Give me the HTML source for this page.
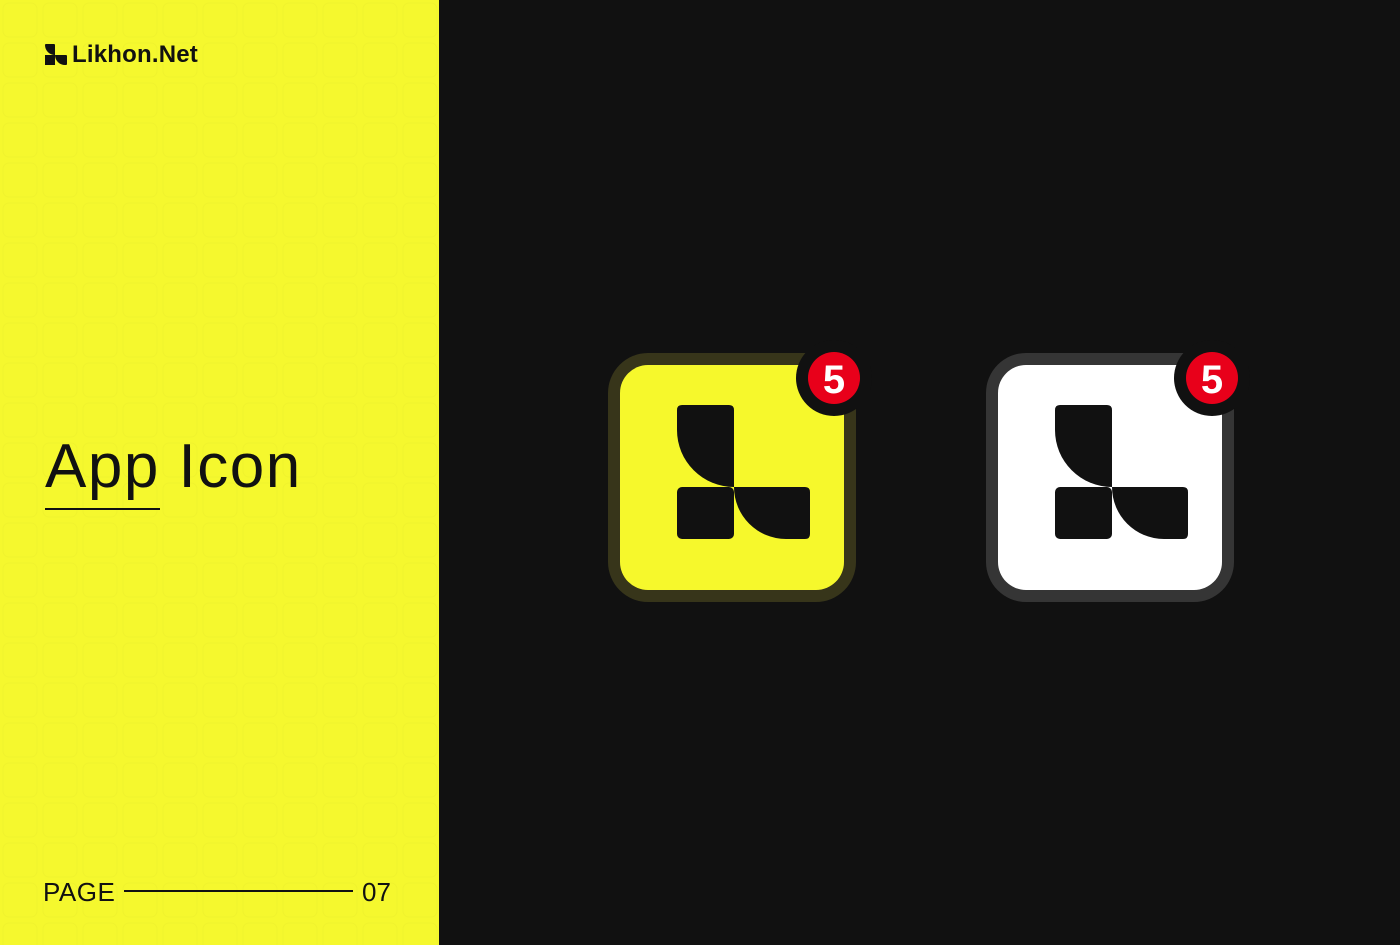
<!DOCTYPE html>
<html><head><meta charset="utf-8"><style>
html,body{margin:0;padding:0}
body{width:1400px;height:945px;position:relative;overflow:hidden;background:#111;font-family:"Liberation Sans",sans-serif}
.left{position:absolute;left:0;top:0;width:439px;height:945px;background:#f5f82e}
.t{position:absolute;color:#111;white-space:nowrap}
</style></head><body>
<div class="left">
<svg width="439" height="945" style="position:absolute;left:0;top:0">
<defs><pattern id="p" width="40" height="40" patternUnits="userSpaceOnUse">
<rect x="3" y="3" width="34" height="34" rx="6" fill="none" stroke="#e4e72a" stroke-width="1"/>
</pattern></defs>
<rect width="439" height="945" fill="url(#p)" opacity="0.3"/>
<g fill="#111">
<path d="M45,45 q0,-1 1,-1 h8 q1,0 1,1 v10 a10,10 0 0 1 -10,-10 z M45,55 h10 v10 h-10 z M55,55 h11 q1,0 1,1 v8 q0,1 -1,1 h-1 a10,10 0 0 1 -10,-10 z"/>
</g>
</svg>
<div class="t" style="left:72px;top:41px;font-size:24px;font-weight:bold;letter-spacing:0.2px">Likhon.Net</div>
<div class="t" style="left:45px;top:431px;font-size:62px;letter-spacing:1.5px">App Icon</div>
<div style="position:absolute;left:45px;top:508px;width:115px;height:2px;background:#111"></div>
<div class="t" style="left:43px;top:877px;font-size:26px;letter-spacing:0.5px">PAGE</div>
<div style="position:absolute;left:124px;top:890px;width:229px;height:2px;background:#111"></div>
<div class="t" style="left:362px;top:877px;font-size:26px">07</div>
</div>
<svg width="1400" height="945" style="position:absolute;left:0;top:0">
<g>
<rect x="608" y="353" width="248" height="249" rx="40" fill="#37351a"/>
<rect x="620" y="365" width="224" height="225" rx="28" fill="#f6f82c"/>
<g fill="#111">
<path d="M677,410 q0,-5 5,-5 h47 q5,0 5,5 v77 a57,57 0 0 1 -57,-57 z"/>
<rect x="677" y="487" width="57" height="52" rx="5"/>
<path d="M734,487 h71 q5,0 5,5 v42 q0,5 -5,5 h-19 a52,52 0 0 1 -52,-52 z"/>
</g>
<circle cx="834" cy="378" r="38" fill="#111"/>
<circle cx="834" cy="378" r="26" fill="#e8001a"/>
<text x="834" y="393" text-anchor="middle" font-family="Liberation Sans" font-weight="bold" font-size="40" fill="#fff">5</text>
</g>
<g transform="translate(378,0)">
<rect x="608" y="353" width="248" height="249" rx="40" fill="#353535"/>
<rect x="620" y="365" width="224" height="225" rx="28" fill="#ffffff"/>
<g fill="#111">
<path d="M677,410 q0,-5 5,-5 h47 q5,0 5,5 v77 a57,57 0 0 1 -57,-57 z"/>
<rect x="677" y="487" width="57" height="52" rx="5"/>
<path d="M734,487 h71 q5,0 5,5 v42 q0,5 -5,5 h-19 a52,52 0 0 1 -52,-52 z"/>
</g>
<circle cx="834" cy="378" r="38" fill="#111"/>
<circle cx="834" cy="378" r="26" fill="#e8001a"/>
<text x="834" y="393" text-anchor="middle" font-family="Liberation Sans" font-weight="bold" font-size="40" fill="#fff">5</text>
</g>
</svg>
</body></html>
